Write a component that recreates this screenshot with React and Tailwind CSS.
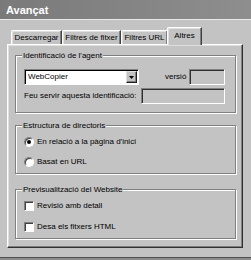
export default function App() {
  const tabs = [
    { label: "Descarregar", w: "w-[51px]" },
    { label: "Filtres de fitxer", w: "w-[59px]" },
    { label: "Filtres URL", w: "w-[47px]" },
  ];

  return (
    <div className="w-[251px] h-[260px] bg-[#c3c3c3] flex flex-col text-[8px] leading-[10px] text-black font-['Liberation_Sans',Arial,sans-serif] overflow-hidden">
      {/* TITLE */}
      <div className="h-[19px] shrink-0 flex items-center pl-[6px] bg-gradient-to-r from-[#7a7a7a] to-[#8e8e8e] text-white text-[11px] font-bold">
        Avançat
      </div>

      {/* BODY */}
      <div className="flex-1 flex flex-col border-t border-[#e8e8e8] pl-[7px] pt-[7px]">
        {/* TABS */}
        <div className="flex items-end h-[17px] pl-[4px]">
          {tabs.map((t) => (
            <div
              key={t.label}
              className={`${t.w} h-[14px] flex items-center justify-center whitespace-nowrap border-t border-l border-white border-r border-r-[#404040] rounded-tl-[2px] shadow-[inset_-1px_0_0_#808080,inset_1px_1px_0_#dfdfdf]`}
            >
              {t.label}
            </div>
          ))}
          <div className="relative z-10 -mb-px w-[35px] h-[18px] -ml-px flex items-start pt-[3px] justify-center bg-[#c3c3c3] border-t border-l border-white border-r border-r-[#404040] rounded-tl-[2px] shadow-[inset_-1px_0_0_#808080,inset_1px_1px_0_#dfdfdf]">
            Altres
          </div>
        </div>

        {/* PANEL */}
        <div className="w-[236px] h-[204px] flex flex-col border border-white border-r-[#303030] border-b-[#303030] shadow-[inset_-1px_-1px_0_#808080,inset_1px_1px_0_#dfdfdf] pl-[7px] pt-[10px]">
          {/* GROUP 1 */}
          <div className="w-[221px] h-[58px] flex flex-col border border-[#808080] shadow-[inset_1px_1px_0_#fff,1px_1px_0_#fff] pl-[8px]">
            <span className="-mt-[6px] -ml-[2px] self-start px-[1px] bg-[#c3c3c3] leading-[11px]">
              Identificació de l'agent
            </span>
            <div className="flex items-center mt-[8px] h-[16px]">
              <div className="w-[115px] h-[16px] flex items-center justify-between bg-white border border-[#808080] border-r-white border-b-white shadow-[inset_1px_1px_0_#000] pl-[3px] pr-[1px]">
                <span>WebCopier</span>
                <div className="w-[11px] h-[12px] flex items-center justify-center bg-[#c3c3c3] border border-[#e0e0e0] border-r-[#202020] border-b-[#202020] shadow-[inset_-1px_-1px_0_#808080]">
                  <svg width="5" height="3" viewBox="0 0 5 3">
                    <path d="M0 0h5L2.5 3z" fill="#000" />
                  </svg>
                </div>
              </div>
              <span className="ml-[26px] w-[24px]">versió</span>
              <div className="w-[36px] h-[16px] border border-[#808080] border-r-white border-b-white shadow-[inset_1px_1px_0_#303030]" />
            </div>
            <div className="flex items-center mt-[3px] h-[16px]">
              <span className="w-[117px] whitespace-nowrap">Feu servir aquesta identificació:</span>
              <div className="w-[84px] h-[16px] border border-[#808080] border-r-white border-b-white shadow-[inset_1px_1px_0_#303030]" />
            </div>
          </div>

          {/* GROUP 2 */}
          <div className="mt-[12px] w-[221px] h-[49px] flex flex-col border border-[#808080] shadow-[inset_1px_1px_0_#fff,1px_1px_0_#fff] pl-[8px]">
            <span className="-mt-[6px] -ml-[2px] self-start px-[1px] bg-[#c3c3c3] leading-[11px]">
              Estructura de directoris
            </span>
            <div className="flex items-center mt-[5px] h-[12px] gap-[3px]">
              <Radio checked />
              <span>En relació a la pàgina d'inici</span>
            </div>
            <div className="flex items-center mt-[8px] h-[12px] gap-[3px]">
              <Radio />
              <span>Basat en URL</span>
            </div>
          </div>

          {/* GROUP 3 */}
          <div className="mt-[15px] w-[221px] h-[50px] flex flex-col border border-[#808080] shadow-[inset_1px_1px_0_#fff,1px_1px_0_#fff] pl-[8px]">
            <span className="-mt-[6px] -ml-[2px] self-start px-[1px] bg-[#c3c3c3] leading-[11px]">
              Previsualització del Website
            </span>
            <div className="flex items-center mt-[5px] h-[12px] gap-[3px]">
              <Check />
              <span>Revisió amb detall</span>
            </div>
            <div className="flex items-center mt-[9px] h-[12px] gap-[3px]">
              <Check />
              <span>Desa els fitxers HTML</span>
            </div>
          </div>
        </div>

        <div className="flex-1" />
      </div>
      <div className="h-[3px] shrink-0 border-t border-[#505050] bg-[#8c8c8c]" />
    </div>
  );
}

function Radio({ checked }) {
  return (
    <div className="w-[10px] h-[10px] rounded-full flex items-center justify-center bg-white border border-[#808080] border-r-white border-b-white shadow-[inset_1px_1px_0_#404040]">
      {checked && <div className="w-[4px] h-[4px] rounded-full bg-black" />}
    </div>
  );
}

function Check() {
  return (
    <div className="w-[10px] h-[10px] bg-white border border-[#808080] border-r-white border-b-white shadow-[inset_1px_1px_0_#404040]" />
  );
}
